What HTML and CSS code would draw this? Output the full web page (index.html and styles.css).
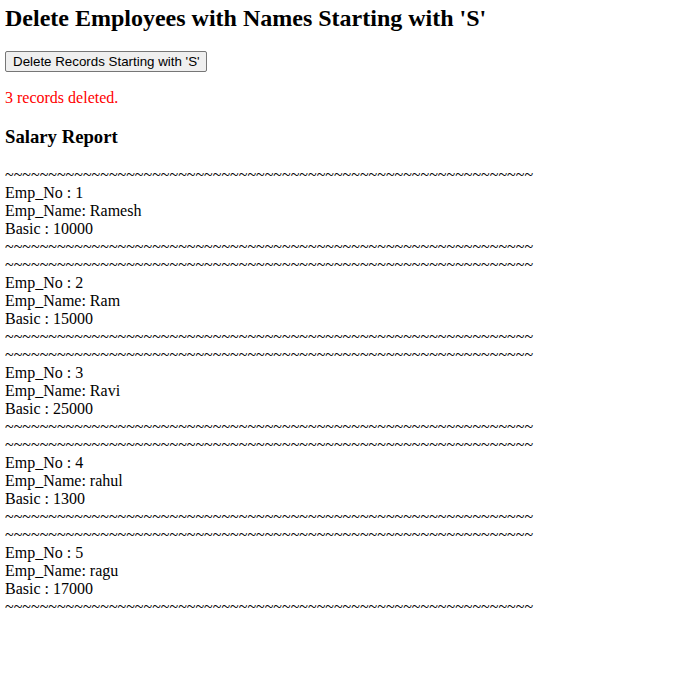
FILE: index.html
```html
<!DOCTYPE html>
<html>
<head>
<meta charset="utf-8">
<title>Delete Employees</title>
<link rel="stylesheet" href="styles.css">
</head>
<body>
<h2 class="title">Delete Employees with Names Starting with 'S'</h2>
<form class="del-form">
<button type="button" class="del-btn">Delete Records Starting with 'S'</button>
</form>
<p class="msg">3 records deleted.</p>
<h3 class="report-title">Salary Report</h3>
<div class="report">~~~~~~~~~~~~~~~~~~~~~~~~~~~~~~~~~~~~~~~~~~~~~~~~~~~~~~~~~~~~~<br>Emp_No : 1<br>Emp_Name: Ramesh<br>Basic : 10000<br>~~~~~~~~~~~~~~~~~~~~~~~~~~~~~~~~~~~~~~~~~~~~~~~~~~~~~~~~~~~~~<br>~~~~~~~~~~~~~~~~~~~~~~~~~~~~~~~~~~~~~~~~~~~~~~~~~~~~~~~~~~~~~<br>Emp_No : 2<br>Emp_Name: Ram<br>Basic : 15000<br>~~~~~~~~~~~~~~~~~~~~~~~~~~~~~~~~~~~~~~~~~~~~~~~~~~~~~~~~~~~~~<br>~~~~~~~~~~~~~~~~~~~~~~~~~~~~~~~~~~~~~~~~~~~~~~~~~~~~~~~~~~~~~<br>Emp_No : 3<br>Emp_Name: Ravi<br>Basic : 25000<br>~~~~~~~~~~~~~~~~~~~~~~~~~~~~~~~~~~~~~~~~~~~~~~~~~~~~~~~~~~~~~<br>~~~~~~~~~~~~~~~~~~~~~~~~~~~~~~~~~~~~~~~~~~~~~~~~~~~~~~~~~~~~~<br>Emp_No : 4<br>Emp_Name: rahul<br>Basic : 1300<br>~~~~~~~~~~~~~~~~~~~~~~~~~~~~~~~~~~~~~~~~~~~~~~~~~~~~~~~~~~~~~<br>~~~~~~~~~~~~~~~~~~~~~~~~~~~~~~~~~~~~~~~~~~~~~~~~~~~~~~~~~~~~~<br>Emp_No : 5<br>Emp_Name: ragu<br>Basic : 17000<br>~~~~~~~~~~~~~~~~~~~~~~~~~~~~~~~~~~~~~~~~~~~~~~~~~~~~~~~~~~~~~</div>
</body>
</html>
```
FILE: styles.css
```css
html, body {
  background: #fff;
}
body {
  margin: 5px;
  font-family: "Liberation Serif", "Times New Roman", serif;
  font-size: 16px;
  color: #000;
}
.title {
  font-size: 24px;
  font-weight: bold;
  margin: 0 0 19px 0;
}
.del-form {
  margin: 0;
}
.del-btn {
  font-family: "Liberation Sans", Arial, sans-serif;
  font-size: 13.333px;
  line-height: 15px;
  color: #000;
  background: #efefef;
  border: 1px solid #767676;
  border-radius: 2px;
  padding: 2px 6px 2px 7px;
  margin: 0;
}
.msg {
  color: red;
  margin: 17px 0 16px 0;
}
.report-title {
  font-size: 18.72px;
  font-weight: bold;
  margin: 18.72px 0;
}
.report {
  white-space: nowrap;
  line-height: 18px;
}
```
